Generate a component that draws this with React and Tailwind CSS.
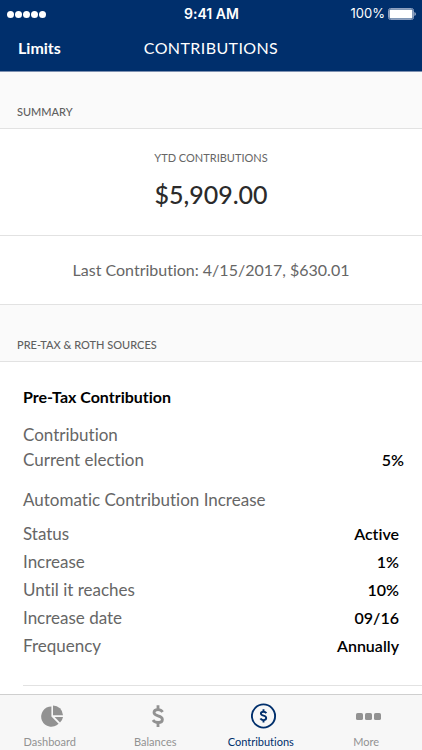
const increaseRows = [
  { label: 'Status', value: 'Active' },
  { label: 'Increase', value: '1%' },
  { label: 'Until it reaches', value: '10%' },
  { label: 'Increase date', value: '09/16' },
  { label: 'Frequency', value: 'Annually' },
];

const PieIcon = () => (
  <svg width="24" height="24" viewBox="0 0 24 24" fill="currentColor" aria-hidden="true">
    <path d="M10.4 2.4V12.6L17.6 19.8A10.2 10.2 0 1 1 10.4 2.4Z" />
    <path d="M12 1.4A10.2 10.2 0 0 1 22 11.2H12Z" />
    <path d="M13.6 13H22A9.6 9.6 0 0 1 19 18.6Z" />
  </svg>
);

const DollarIcon = () => (
  <svg width="24" height="24" viewBox="0 0 24 24" fill="none" stroke="currentColor" strokeWidth="2.8" aria-hidden="true">
    <path d="M16.6 8C15.6 6.4 14 5.7 12 5.7C9.6 5.7 8 6.8 8 8.6C8 10.6 9.8 11.2 12 11.8C14.4 12.4 16.4 13.1 16.4 15.4C16.4 17.3 14.6 18.5 12.1 18.5C9.8 18.5 8 17.6 7 16" />
    <path d="M12 1.2V6M12 18V23" />
  </svg>
);

const ContributionsIcon = () => (
  <svg width="26" height="26" viewBox="0 0 26 26" fill="none" stroke="currentColor" aria-hidden="true">
    <circle cx="12.5" cy="13" r="11.6" strokeWidth="1.9" />
    <path
      strokeWidth="1.9"
      d="M15.4 10.1C14.7 9.1 13.7 8.7 12.5 8.7C11 8.7 9.9 9.4 9.9 10.6C9.9 11.9 11 12.3 12.5 12.7C14.1 13.1 15.2 13.6 15.2 15C15.2 16.3 14.1 17.1 12.5 17.1C11.1 17.1 10 16.5 9.4 15.5"
    />
    <path strokeWidth="1.9" d="M12.5 6.3V9M12.5 17V19.6" />
  </svg>
);

const MoreIcon = () => (
  <svg width="26" height="26" viewBox="0 0 26 26" fill="currentColor" aria-hidden="true">
    <rect x="0" y="10" width="7" height="7" rx="1.6" />
    <rect x="9" y="10" width="7" height="7" rx="1.6" />
    <rect x="18" y="10" width="7" height="7" rx="1.6" />
  </svg>
);

const tabs = [
  { name: 'Dashboard', icon: <PieIcon /> },
  { name: 'Balances', icon: <DollarIcon /> },
  { name: 'Contributions', icon: <ContributionsIcon />, active: true },
  { name: 'More', icon: <MoreIcon /> },
];

const StatusBar = () => (
  <div className="grid grid-cols-3 items-center h-7 pl-[7px] pr-1.5 font-['Inter',sans-serif] text-[13px]">
    <div className="flex gap-px">
      {[1, 2, 3, 4, 5].map((dot) => (
        <span key={dot} className="size-[7px] rounded-full bg-white" />
      ))}
    </div>
    <span className="text-center text-sm font-semibold">9:41 AM</span>
    <div className="flex items-center justify-end gap-[3px]">
      <span>100%</span>
      <svg width="28" height="12" viewBox="0 0 28 12" aria-hidden="true">
        <rect x="0.5" y="0.5" width="25" height="11" rx="2" fill="none" stroke="#8da0c0" />
        <rect x="1.5" y="1.5" width="23" height="9" rx="1" fill="#fff" />
        <path d="M26.5 4A2.2 2.2 0 0 1 26.5 8Z" fill="#c5cfdf" />
      </svg>
    </div>
  </div>
);

const SectionHeader = ({ children }) => (
  <h2 className="flex items-end h-[57px] px-[17px] pb-1.5 bg-[#fafafa] border-b border-[#e2e2e2] text-[11px] leading-5 font-medium text-[#606060]">
    {children}
  </h2>
);

export default function App() {
  return (
    <div className="flex flex-col min-h-screen bg-white font-['Lato',sans-serif] [font-variant-ligatures:none] text-[17px] text-[#666666]">
      <header className="bg-[#002f6c] text-white border-b border-[#7d90b0]">
        <StatusBar />
        <div className="grid grid-cols-[1fr_auto_1fr] items-center h-[43px] px-[18px] pb-[3px]">
          <button type="button" className="justify-self-start text-base font-bold">
            Limits
          </button>
          <h1 className="text-base tracking-wide">CONTRIBUTIONS</h1>
        </div>
      </header>

      <main className="flex-1">
        <SectionHeader>SUMMARY</SectionHeader>
        <div className="flex flex-col items-center h-[107px] pt-[19px] border-b border-[#e2e2e2]">
          <span className="text-[11px] leading-5">YTD CONTRIBUTIONS</span>
          <span className="mt-2.5 text-[25px] leading-8 font-medium text-[#2b2b2b]">$5,909.00</span>
        </div>
        <p className="py-[22px] text-center text-base leading-6 border-b border-[#e2e2e2]">
          Last Contribution: 4/15/2017, $630.01
        </p>

        <SectionHeader>PRE-TAX &amp; ROTH SOURCES</SectionHeader>
        <section className="pl-[23px] pt-[23px] leading-[25px]">
          <h3 className="text-base font-bold text-black leading-6">Pre-Tax Contribution</h3>
          <h4 className="mt-[13px]">Contribution</h4>
          <dl className="flex justify-between pr-[18px]">
            <dt>Current election</dt>
            <dd className="text-base leading-[25px] font-semibold text-black">5%</dd>
          </dl>
          <h4 className="mt-[15px]">Automatic Contribution Increase</h4>
          <dl className="mt-2 pr-[23px] leading-7">
            {increaseRows.map((row) => (
              <div key={row.label} className="flex justify-between">
                <dt>{row.label}</dt>
                <dd className="text-base leading-7 font-semibold text-black">{row.value}</dd>
              </div>
            ))}
          </dl>
          <hr className="mt-[25px] border-[#e2e2e2]" />
        </section>
      </main>

      <nav className="sticky bottom-0 grid grid-cols-4 h-14 bg-[#f7f7f7] border-t border-[#cfcfcf] text-[11px]">
        {tabs.map((tab) => (
          <a
            key={tab.name}
            href="#"
            aria-current={tab.active ? 'page' : undefined}
            className={`flex flex-col items-center pt-2 ${tab.active ? 'text-[#002f6c]' : 'text-[#929292]'}`}
          >
            <span className="flex items-center h-[26px]">{tab.icon}</span>
            <span className="mt-[5px] pr-1.5 leading-4">{tab.name}</span>
          </a>
        ))}
      </nav>
    </div>
  );
}
